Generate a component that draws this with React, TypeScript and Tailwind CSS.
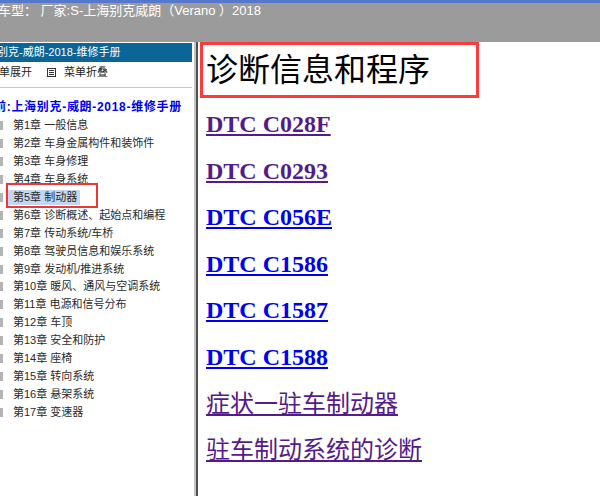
import React from "react";

const chapters = [
  "第1章 一般信息",
  "第2章 车身金属构件和装饰件",
  "第3章 车身修理",
  "第4章 车身系统",
  "第5章 制动器",
  "第6章 诊断概述、起始点和编程",
  "第7章 传动系统/车桥",
  "第8章 驾驶员信息和娱乐系统",
  "第9章 发动机/推进系统",
  "第10章 暖风、通风与空调系统",
  "第11章 电源和信号分布",
  "第12章 车顶",
  "第13章 安全和防护",
  "第14章 座椅",
  "第15章 转向系统",
  "第16章 悬架系统",
  "第17章 变速器",
];

const links: { text: string; visited: boolean; bold: boolean }[] = [
  { text: "DTC C028F", visited: true, bold: true },
  { text: "DTC C0293", visited: true, bold: true },
  { text: "DTC C056E", visited: false, bold: true },
  { text: "DTC C1586", visited: false, bold: true },
  { text: "DTC C1587", visited: false, bold: true },
  { text: "DTC C1588", visited: false, bold: true },
  { text: "症状一驻车制动器", visited: true, bold: false },
  { text: "驻车制动系统的诊断", visited: true, bold: false },
];

const sans = { fontFamily: '"Liberation Sans", "Noto Sans CJK SC", sans-serif' };

export default function App() {
  return (
    <div className="w-[600px] h-[496px] overflow-hidden bg-white flex flex-col font-['Liberation_Sans','Noto_Sans_CJK_SC',sans-serif]">
      {/* top bar */}
      <div className="h-[42px] shrink-0 bg-[#9b9b9b] border-t-[3px] border-[#5577cc] overflow-hidden">
        <div className="ml-[-2px] text-[13px] leading-[16px] text-white whitespace-nowrap">
          车型： 厂家:S-上海别克威朗（Verano ）2018
        </div>
      </div>

      <div className="flex flex-1 min-h-0">
        {/* left panel */}
        <div className="relative w-[194px] shrink-0 overflow-hidden bg-white">
          <div className="mt-px h-[19px] w-[192px] bg-[#0b6597] flex items-center overflow-hidden">
            <span className="ml-[-3px] text-[11px] text-white whitespace-nowrap">别克-威朗-2018-维修手册</span>
          </div>
          <div className="h-[26px] w-[192px] border-b border-[#c8c8c8] pt-[3px] flex items-start text-[11px] leading-[15px] text-[#222] whitespace-nowrap">
            <span className="ml-[-1px]">单展开</span>
            <svg className="ml-[15px] mt-[3px]" width="9" height="9" viewBox="0 0 9 9">
              <rect x="0.5" y="0.5" width="8" height="8" fill="white" stroke="#333" />
              <line x1="2" y1="2.5" x2="7" y2="2.5" stroke="#333" />
              <line x1="2" y1="4.5" x2="7" y2="4.5" stroke="#333" />
              <line x1="2" y1="6.5" x2="7" y2="6.5" stroke="#333" />
            </svg>
            <span className="ml-[8px]">菜单折叠</span>
          </div>
          <div className="mt-[9px] h-[20px] flex items-center whitespace-nowrap">
            <span className="ml-[-6px] text-[12px] font-bold tracking-[0.7px] text-[#0000ee]">前:上海别克-威朗-2018-维修手册</span>
          </div>
          <div className="flex flex-col">
            {chapters.map((c, i) => (
              <div key={c} className="h-[17.9px] flex items-center whitespace-nowrap">
                <span className="w-[3px] h-[9px] bg-[#b4b4b4]" />
                <span
                  className={
                    i === 4
                      ? "ml-[5px] pl-[5px] pr-[3px] bg-[#c3d7ef] text-[11px] leading-[15px] text-[#2a2a2a]"
                      : "ml-[5px] pl-[5px] text-[11px] leading-[15px] text-[#2a2a2a]"
                  }
                >
                  {c}
                </span>
              </div>
            ))}
          </div>
          {/* annotation box */}
          <div className="absolute left-[6px] top-[141px] w-[92px] h-[25px] border-2 border-[#e83838]" />
        </div>

        {/* divider */}
        <div className="w-[4px] shrink-0 flex">
          <div className="w-[2px] bg-[#c4c4c4]" />
          <div className="w-[2px] bg-[#505050]" />
        </div>

        {/* right pane */}
        <div className="flex-1 min-w-0 bg-white" style={sans}>
          <div className="ml-[2px] w-[279px] h-[56px] border-[3px] border-[#fd3b3b] flex items-center pl-[3px]">
            <span className="text-[32px] leading-[36px] text-black whitespace-nowrap font-['Liberation_Serif','Noto_Sans_CJK_SC',serif]">
              诊断信息和程序
            </span>
          </div>
          <div className="mt-[3px] ml-[8px] flex flex-col">
            {links.map((l) => (
              <div key={l.text} className="h-[46.6px] leading-[46.6px] whitespace-nowrap">
                <a
                  href="#"
                  className={
                    (l.visited ? "text-[#551a8b] " : "text-[#0000ee] ") +
                    (l.bold ? "font-bold " : "font-normal ") +
                    "underline text-[24px] font-['Liberation_Serif','Noto_Sans_CJK_SC',serif]"
                  }
                >
                  {l.text}
                </a>
              </div>
            ))}
          </div>
        </div>
      </div>
    </div>
  );
}
